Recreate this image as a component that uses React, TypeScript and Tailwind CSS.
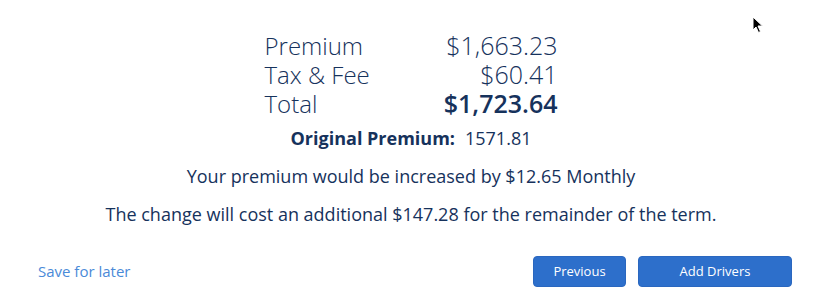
import React from "react";

export default function App() {
  return (
    <div
      className="relative w-[822px] h-[299px] bg-white text-[#16325c] overflow-hidden"
      style={{ fontFamily: "'Open Sans', Lato, sans-serif" }}
    >
      <svg className="absolute left-[752px] top-[16px]" width="12" height="18" viewBox="0 0 12 18">
        <path d="M1 1 L1 14 L4 11 L6.5 16.5 L8.5 15.5 L6 10 L10.5 10 Z" fill="#000" stroke="#fff" strokeWidth="1" />
      </svg>
      <div className="flex flex-col items-center pt-[31px]">
        <div className="grid grid-cols-2 w-[293px] text-[24px] leading-[29px] font-light">
          <div>Premium</div>
          <div className="text-right text-[25px]">$1,663.23</div>
          <div>Tax &amp; Fee</div>
          <div className="text-right text-[25px]">$60.41</div>
          <div>Total</div>
          <div className="text-right font-semibold text-[25px]">$1,723.64</div>
        </div>
        <div className="mt-[8px] text-[18px] leading-[24px]">
          <span className="font-bold">Original Premium:</span>
          <span className="ml-[10px]">1571.81</span>
        </div>
        <div className="mt-[14px] text-[18px] leading-[24px]">
          Your premium would be increased by $12.65 Monthly
        </div>
        <div className="mt-[14px] text-[18px] leading-[24px]">
          The change will cost an additional $147.28 for the remainder of the term.
        </div>
      </div>
      <div className="flex items-center justify-between pl-[38px] pr-[30px] mt-[30px]">
        <a className="text-[#4a8ad8] text-[15px]">Save for later</a>
        <div className="flex gap-[12px]">
          <button className="w-[93px] h-[31px] rounded-[4px] bg-[#2d6fcb] text-white text-[13px] border border-[#2a67bf]">
            Previous
          </button>
          <button className="w-[154px] h-[31px] rounded-[4px] bg-[#2d6fcb] text-white text-[13px] border border-[#2a67bf]">
            Add Drivers
          </button>
        </div>
      </div>
    </div>
  );
}
